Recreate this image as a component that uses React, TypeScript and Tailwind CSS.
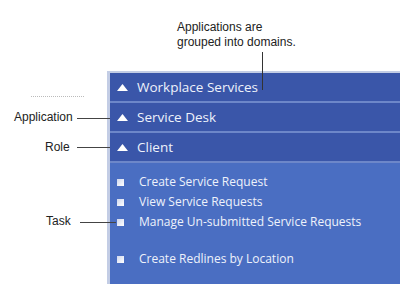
import React from "react";

const Tri = () => (
  <svg width="11" height="7" viewBox="0 0 11 7" className="shrink-0">
    <polygon points="5.5,0 11,7 0,7" fill="#ffffff" />
  </svg>
);

const Header = ({ label }: { label: string }) => (
  <div className="flex h-[30px] items-center gap-[9px] border-b-2 border-[#6d87c9] bg-[#3a56a9] pl-[7px] pt-px text-[13.5px] text-[#eef2fb]" style={{ fontFamily: '"Open Sans", sans-serif' }}>
    <Tri />
    <span>{label}</span>
  </div>
);

const Task = ({ label, extra }: { label: string; extra?: boolean }) => (
  <div className={`flex h-[20px] items-center gap-[15px] pl-[7px] ${extra ? "mt-[17px]" : ""}`}>
    <div className="h-[7px] w-[7px] bg-gradient-to-br from-[#d0d8ee] to-[#ffffff]" />
    <span>{label}</span>
  </div>
);

export default function App() {
  return (
    <div className="relative h-[284px] w-[400px] overflow-hidden bg-white" style={{ fontFamily: '"Liberation Sans", Arial, sans-serif' }}>
      <div className="flex h-full flex-col">
        <div className="h-[71px] shrink-0" />
        <div className="flex flex-1">
          <div className="w-[107px] shrink-0" />
          <div className="flex flex-1 flex-col border-l-[3px] border-t-2 border-[#c3cde5] bg-[#4a6ec2]">
            <Header label="Workplace Services" />
            <Header label="Service Desk" />
            <Header label="Client" />
            <div className="flex flex-col pt-[9px] text-[12px] text-[#eef2fb]" style={{ fontFamily: '"Open Sans", sans-serif' }}>
              <Task label="Create Service Request" />
              <Task label="View Service Requests" />
              <Task label="Manage Un-submitted Service Requests" />
              <Task label="Create Redlines by Location" extra />
            </div>
          </div>
        </div>
      </div>

      {/* callouts */}
      <div className="absolute left-[177px] top-[20px] text-[12px] leading-[15px] text-[#222]">
        <div>Applications are</div>
        <div>grouped into domains.</div>
      </div>
      <div className="absolute left-[262px] top-[52px] h-[38px] w-px bg-[#333]" />

      <div className="absolute left-[14px] top-[110px] text-[12px] leading-[15px] text-[#222]">Application</div>
      <div className="absolute left-[77px] top-[118px] h-px w-[33px] bg-[#444]" />

      <div className="absolute left-[45px] top-[140px] text-[12px] leading-[15px] text-[#222]">Role</div>
      <div className="absolute left-[77px] top-[147px] h-px w-[33px] bg-[#444]" />

      <div className="absolute left-[46px] top-[214px] text-[12px] leading-[15px] text-[#222]">Task</div>
      <div className="absolute left-[80px] top-[222px] h-px w-[36px] bg-[#444]" />

      <div className="absolute left-[31px] top-[96px] w-[53px] border-t border-dotted border-[#bbb]" />
    </div>
  );
}
